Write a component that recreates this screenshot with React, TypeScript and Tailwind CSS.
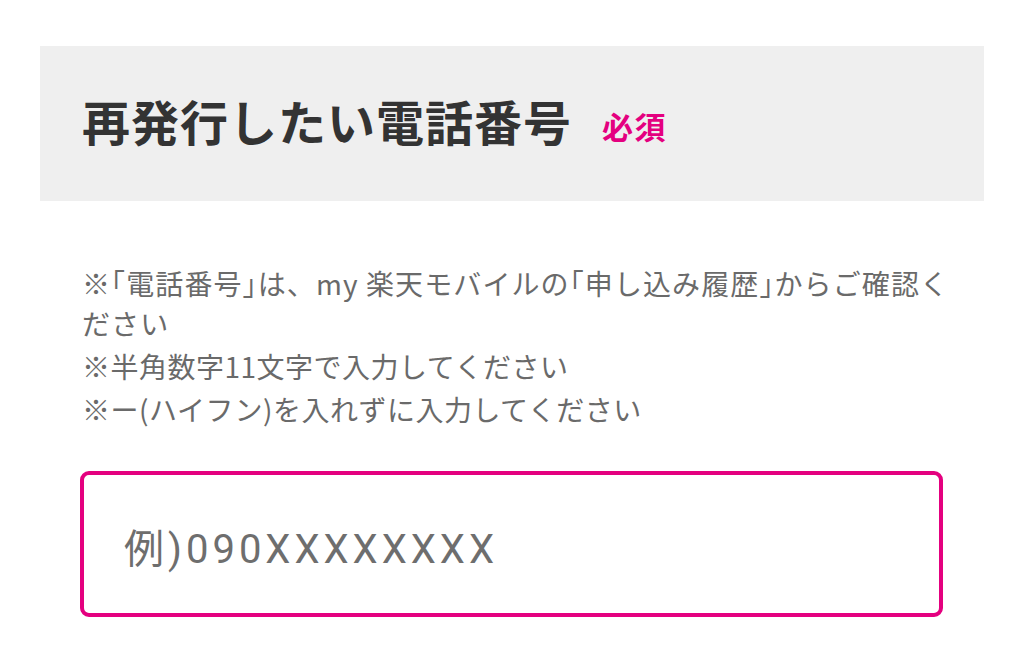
import React from "react";

export default function App() {
  return (
    <div
      className="w-[1024px] h-[666px] bg-white overflow-hidden px-[40px] pt-[46px]"
      style={{ fontFamily: '"Noto Sans CJK JP", "Noto Sans", sans-serif' }}
    >
      <div className="bg-[#efefef] h-[155px] flex items-center pl-[42px] pb-[8px]">
        <h1 className="text-[48px] font-bold text-[#333333] tracking-[1px]">再発行したい電話番号</h1>
        <span className="ml-[30px] mt-[14px] text-[31px] font-bold text-[#e4007f] tracking-[1.5px]">必須</span>
      </div>
      <div className="pl-[42px] pr-[20px] pt-[62px] text-[28px] leading-[40px] text-[#6a6a6a] tracking-[0.5px]">
        <p className="tracking-[1.1px]">※｢電話番号｣は、my 楽天モバイルの｢申し込み履歴｣からご確認ください</p>
        <p className="mt-[3px]">※半角数字11文字で入力してください</p>
        <p className="mt-[3px]">※ー(ハイフン)を入れずに入力してください</p>
      </div>
      <div className="px-[40px] pt-[42px]">
        <div className="w-[863px] h-[146px] border-[4px] border-[#e4007f] rounded-[9px] flex items-center pl-[40px] pt-[12px]">
          <input
            className="w-full outline-none text-[40px] text-[#333] placeholder:text-[#6e6e6e] bg-transparent tracking-[4px]"
            placeholder="例)090XXXXXXXX"
            style={{ fontFamily: 'Roboto, "Noto Sans CJK JP", sans-serif' }}
          />
        </div>
      </div>
    </div>
  );
}
